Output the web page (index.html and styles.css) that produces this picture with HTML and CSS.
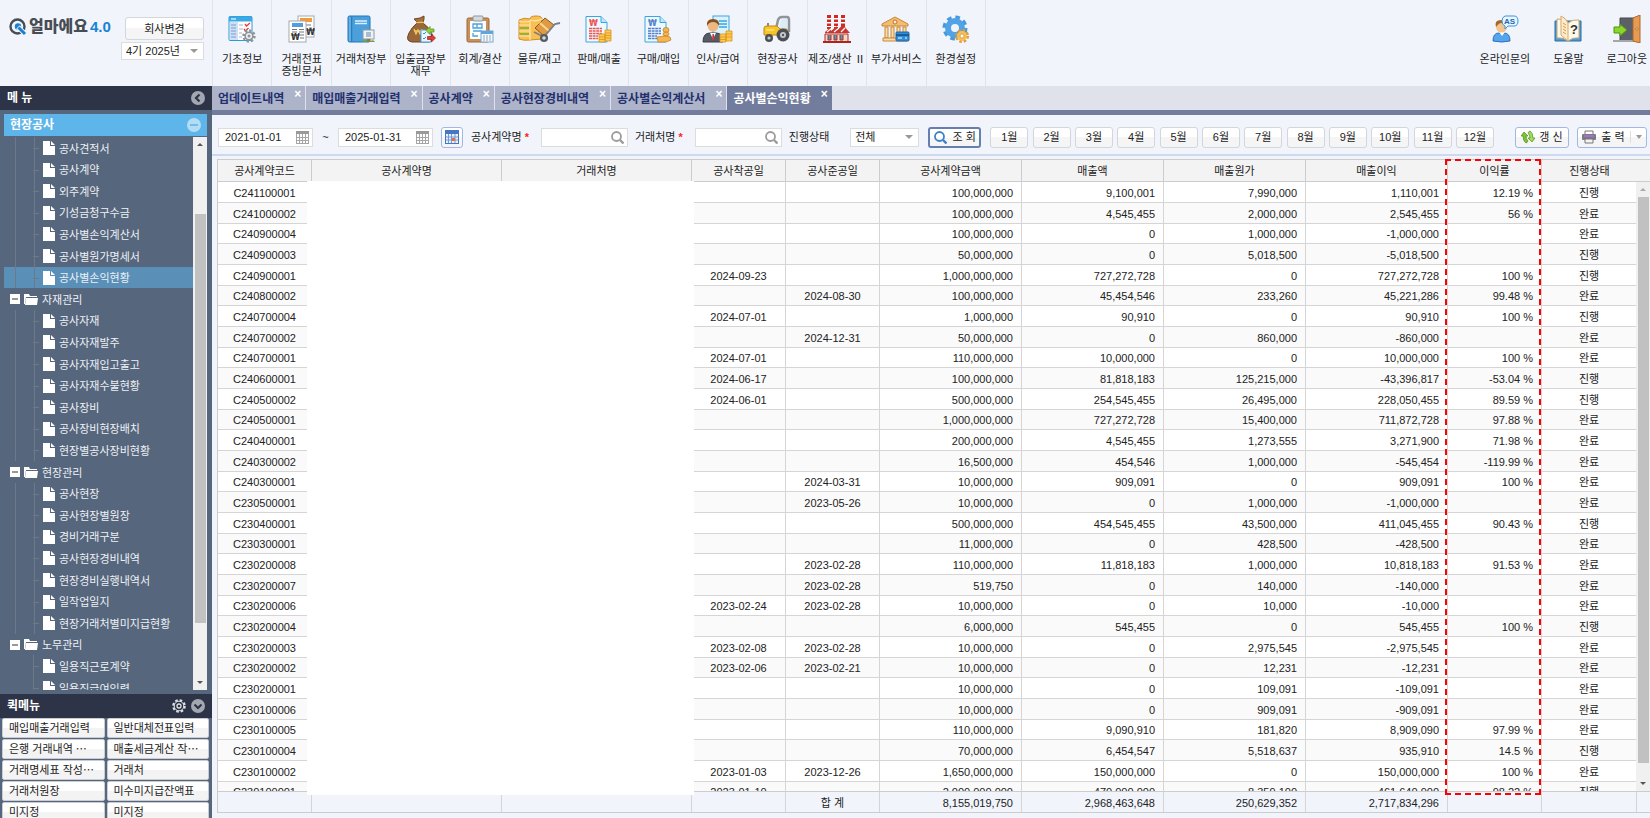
FILE: index.html
```html
<!DOCTYPE html>
<html lang="ko">
<head>
  <meta charset="UTF-8">
  <meta name="viewport" content="width=device-width, initial-scale=1.0">
  <title>얼마에요 4.0 - 공사별손익현황</title>
  <link rel="stylesheet" href="styles.css">
</head>
<body>
  <header class="top">
    <div class="brand">
      <div class="logo">
        <svg width="18" height="18" viewBox="0 0 18 18"><circle cx="8.500" cy="8.500" r="7" fill="none" stroke="#474c55" stroke-width="2.400"/><circle cx="9" cy="8.500" r="3.200" fill="#1583d2"/><path d="M9 9l7 7" stroke="#f1f4fb" stroke-width="5"/><path d="M9.500 9.500l6.500 6.500" stroke="#1583d2" stroke-width="3"/></svg>
        <span class="logo-name">얼마에요</span>
        <span class="logo-ver">4.0</span>
      </div>
      <div class="company">
        <button class="btn btn-company">회사변경</button>
        <div class="select-wrap year">
          <select aria-label="회계기수"><option>4기 2025년</option></select>
        </div>
      </div>
    </div>
    <nav class="modules">
      <a href="#" class="module">
        <svg width="28" height="28" viewBox="0 0 28 28"><rect x="1" y="1.500" width="23" height="24" rx="1" fill="#fff" stroke="#2b9bd8"/><rect x="1" y="1.500" width="23" height="5" fill="#3aa9e6"/><path d="M3 4h5" stroke="#c7ebff" stroke-width="1.500"/><rect x="2" y="7" width="8" height="18" fill="#cfe0f6"/><path d="M3 10h5M3 13h5M3 16h5M3 19h5M3 22h5" stroke="#7d9bc9"/><path d="M11 10h4M11 14h4M11 18h3M11 22h3" stroke="#a9b4c4"/><path d="M17 9l1.500 2L22 8M16 14l1.500 2 3-3" fill="none" stroke="#e23b3b" stroke-width="1.300"/><circle cx="21" cy="21" r="5.200" fill="none" stroke="#8d949c" stroke-width="3" stroke-dasharray="2.200 1.800"/><circle cx="21" cy="21" r="3.800" fill="#eef0f2" stroke="#8d949c" stroke-width="1.500"/><circle cx="21" cy="21" r="1.500" fill="#8d949c"/></svg>
        <span>기초정보</span>
      </a>
      <a href="#" class="module">
        <svg width="28" height="28" viewBox="0 0 28 28"><rect x="10" y="1" width="16" height="21" fill="#fff" stroke="#a5a9ae"/><rect x="12" y="3" width="12" height="4" fill="#f39a3b"/><path d="M13 10h10M21 13h3" stroke="#777"/><text x="18" y="20" class="won">₩</text><rect x="1" y="6" width="17" height="21" fill="#fff" stroke="#a5a9ae"/><rect x="4" y="8" width="11" height="4" fill="#4f9ee0"/><path d="M4 14.500h5M11 14.500h5M4 17h5M11 17h5M12 20h4M12 23h4" stroke="#777"/><text x="3" y="25" class="won">₩</text></svg>
        <span>거래전표<br>증빙문서</span>
      </a>
      <a href="#" class="module">
        <svg width="28" height="28" viewBox="0 0 28 28"><rect x="1" y="1" width="22" height="26" rx="1.500" fill="#4ba0dc" stroke="#2777b4"/><path d="M4.500 1.500v25" stroke="#2a7dbb" stroke-width="1.500"/><path d="M3 2v24" stroke="#7cc2ef"/><path d="M8 6h12M8 8.500h12" stroke="#d8efff" stroke-width="1.300"/><rect x="16" y="15" width="11" height="9" fill="#f0f3f6" stroke="#8f99a5"/><rect x="19" y="17" width="5" height="5" fill="#a9bccf"/><path d="M15 27q2-3 5-1h3q4-2 5 1z" fill="#6fa43b"/><path d="M20 24h3v3h-3z" fill="#9a7443"/></svg>
        <span>거래처장부</span>
      </a>
      <a href="#" class="module">
        <svg width="30" height="28" viewBox="0 0 30 28"><path d="M11 8q-5 4-8 10-4 8 3 9h17q5-1 3-8-3-7-9-11z" fill="#99673a" stroke="#6d4521"/><path d="M11 7l-3-3 6-1 4-2v3l-1 4z" fill="#a8723f" stroke="#6d4521"/><path d="M10 7.500h8" stroke="#edc45c" stroke-width="1.500"/><path d="M8 14l2 5 2-4 2 4 2-5M8 16h8" fill="none" stroke="#f0c85e" stroke-width="1.300"/><rect x="15" y="15" width="10" height="12" fill="#eaf6ff" stroke="#45a2d8"/><path d="M17 18l1 1 2-2M17 23l1 1 2-2" fill="none" stroke="#2f96c7"/><path d="M20 15.500l4-4v2.500h4v3h-4v2.500z" fill="#8fd136" stroke="#4a911a" stroke-width=".7"/><path d="M29.500 23l-4-4v2.500h-4v3h4v2.500z" fill="#e43b2b" stroke="#a81d14" stroke-width=".7"/></svg>
        <span>입출금장부<br>재무</span>
      </a>
      <a href="#" class="module">
        <svg width="28" height="28" viewBox="0 0 28 28"><rect x="1" y="3" width="22" height="24" rx="1.500" fill="#c98f57" stroke="#9d683a"/><rect x="4" y="6" width="16" height="18" fill="#fff"/><rect x="7" y="1" width="10" height="5" rx="1" fill="#d5d9de" stroke="#8e959c"/><path d="M7 9h9v4H7zM11 9v4M7 16h9M7 18v3h5" fill="none" stroke="#4aa3dd" stroke-width="1.300"/><rect x="15" y="16" width="12" height="11" fill="#f5faff" stroke="#7aa7ce"/><rect x="15" y="16" width="12" height="3" fill="#5fa6df"/><path d="M17 21h8M17 23h8M17 25h8" stroke="#93a9bd" stroke-dasharray="2 1"/></svg>
        <span>회계/결산</span>
      </a>
      <a href="#" class="module">
        <svg width="43" height="28" viewBox="0 0 43 28"><path d="M1 5q5-3 11-1 0-3 6-3t6 3v20l-12 1q-6 1-11-1z" fill="#f9bf55" stroke="#d28b22"/><path d="M1 6q5 2 11 0v19M12 5q6 2 12-1M1 10h11M1 16h11M1 21h11" fill="none" stroke="#ffe6a6" stroke-width="1.200"/><path d="M2 13h9M2 19h9" stroke="#66b634" stroke-width="1.700"/><path d="M17 13L27 3l9 7-10 11z" fill="#e09a41" stroke="#8e5a1d"/><path d="M22 8l9 8" stroke="#fbd793" stroke-width="2"/><path d="M16 17l10 5 11-13 5-1" fill="none" stroke="#7a7f86" stroke-width="1.800"/><circle cx="26" cy="23" r="4" fill="#575c63"/><circle cx="26" cy="23" r="1.800" fill="#d8dbde"/></svg>
        <span>물류/재고</span>
      </a>
      <a href="#" class="module">
        <svg width="28" height="28" viewBox="0 0 28 28"><path d="M1 1.500h15l6 6V27H1z" fill="#eef9ff" stroke="#3aa6de"/><path d="M16 1.500v6h6" fill="#bfe5fa" stroke="#3aa6de"/><text x="4" y="11" class="won red">₩</text><path d="M4 13.500h13M4 16h13M4 18.500h13M4 21h9M4 23.500h9" stroke="#ec5454" stroke-width="1.500" stroke-dasharray="3 .6"/><g fill="#fdca50" stroke="#dc9320" stroke-width=".8"><path d="M14 19h6v8h-6zM20 15h6v11h-6z"/><path d="M14 22h6M14 24.500h6M20 18h6M20 20.500h6M20 23h6"/></g></svg>
        <span>판매/매출</span>
      </a>
      <a href="#" class="module">
        <svg width="28" height="28" viewBox="0 0 28 28"><path d="M1 1.500h15l6 6V27H1z" fill="#eef9ff" stroke="#3aa6de"/><path d="M16 1.500v6h6" fill="#bfe5fa" stroke="#3aa6de"/><text x="4" y="11" class="won blue">₩</text><path d="M4 13.500h13M4 16h13M4 18.500h13M4 21h9M4 23.500h9" stroke="#557fcb" stroke-width="1.500" stroke-dasharray="3 .6"/><g fill="#f5b64f" stroke="#c9822a" stroke-width=".8"><ellipse cx="22" cy="15" rx="3" ry="2.500"/><ellipse cx="22" cy="19" rx="3" ry="2"/><path d="M13 22l8-1 5 1 1 3-5 2h-8z"/></g></svg>
        <span>구매/매입</span>
      </a>
      <a href="#" class="module">
        <svg width="32" height="28" viewBox="0 0 32 28"><rect x="11" y="1" width="16" height="19" fill="#d9f2fd" stroke="#3aa6de"/><path d="M17 6h8M17 9h8M17 12h8" stroke="#3aa6de" stroke-width="1.500"/><path d="M1 27q0-9 7-9h6q7 0 7 9z" fill="#565b66" stroke="#383c45"/><path d="M8 18l3 6 3-6z" fill="#fff"/><path d="M10.500 19h1.500l.5 6h-2.500z" fill="#c93a3a"/><circle cx="11" cy="11" r="5.500" fill="#edb983"/><path d="M5 11q-1-7 6-7t6 7q-2-4-6-4t-6 4z" fill="#87501f"/><g fill="#fdca50" stroke="#dc9320" stroke-width=".8"><path d="M18 19h6v8h-6zM24 16h6v10h-6z"/><path d="M18 22h6M18 24.500h6M24 19h6M24 22h6"/></g></svg>
        <span>인사/급여</span>
      </a>
      <a href="#" class="module">
        <svg width="28" height="28" viewBox="0 0 28 28"><path d="M13 14l2-9q1-3 4-3h5q2 0 2 3v12" fill="none" stroke="#8f959c" stroke-width="2.500"/><path d="M16 13l2-7q0-2 3-2h3v9z" fill="#dcecf7"/><path d="M5 12V8" stroke="#666" stroke-width="1.500"/><path d="M1 13q0-2 3-2h10l3 3h7v6H1z" fill="#f9c526" stroke="#b88a12"/><path d="M3 15h8" stroke="#fff0a6"/><circle cx="20" cy="20" r="6.500" fill="#4b5057"/><circle cx="20" cy="20" r="3" fill="#c7cbd0"/><circle cx="20" cy="20" r="1.200" fill="#555"/><circle cx="6" cy="23" r="4" fill="#4b5057"/><circle cx="6" cy="23" r="1.600" fill="#c7cbd0"/></svg>
        <span>현장공사</span>
      </a>
      <a href="#" class="module">
        <svg width="28" height="28" viewBox="0 0 28 28"><g stroke-width="4" fill="none"><path d="M6 0v14M13 0v14M20 0v12" stroke="#cf2a22"/><path d="M6 3v9M13 3v9M20 3v8" stroke="#fff" stroke-dasharray="1.500 2.500"/></g><path d="M2 17l6-5v4l6-5v4l6-5 7 8H2z" fill="#c8372e"/><path d="M4 17l5-4M11 17l5-4M18 17l4-4" stroke="#fff" stroke-width="1.200"/><path d="M2 19h23v8H2z" fill="#f5d9c5" stroke="#b12b23"/><path d="M5 20v5h3v-5M11 20v5h3v-5M17 20v5h3v-5" fill="#4d97c5" stroke="#b12b23"/><path d="M0 27h28" stroke="#ad241d" stroke-width="2"/></svg>
        <span>제조/생산 Ⅱ</span>
      </a>
      <a href="#" class="module">
        <svg width="30" height="28" viewBox="0 0 30 28"><path d="M14 2L1 9v2h26V9z" fill="#f2bd72" stroke="#c98639"/><circle cx="14" cy="7" r="2" fill="#fff0cd" stroke="#b97528"/><g fill="#fbdda4" stroke="#c98639"><path d="M4 12h3v11H4zM10 12h3v11h-3zM16 12h3v11h-3zM22 12h3v11h-3z"/><path d="M2 23h24v3H2z"/></g><rect x="15" y="17" width="13" height="9" rx="1" fill="#2f8ddc" stroke="#1a67ab"/><path d="M15 20h13" stroke="#164f86" stroke-width="1.500"/><path d="M17 23h4M24 23h2" stroke="#fff"/></svg>
        <span>부가서비스</span>
      </a>
      <a href="#" class="module">
        <svg width="28" height="28" viewBox="0 0 28 28"><circle cx="13" cy="13" r="10.500" fill="none" stroke="#4699df" stroke-width="4" stroke-dasharray="4.500 3.750"/><circle cx="13" cy="13" r="7" fill="none" stroke="#4fa3e6" stroke-width="6"/><circle cx="20" cy="21" r="5.500" fill="none" stroke="#e39a30" stroke-width="3" stroke-dasharray="2.400 1.920"/><circle cx="20" cy="21" r="3.600" fill="#fff" stroke="#f7be56" stroke-width="3"/><circle cx="20" cy="21" r="2" fill="#fff" stroke="#d88d26" stroke-width=".8"/></svg>
        <span>환경설정</span>
      </a>
    </nav>
    <nav class="helpers">
      <a href="#" class="helper">
        <svg width="28" height="28" viewBox="0 0 28 28"><path d="M2 26q0-8 6-8h5q6 0 6 8-8 2-17 0z" fill="#55a4ec" stroke="#2a71bd"/><path d="M8 17l3 4 3-4z" fill="#fff"/><circle cx="10.500" cy="12" r="5.500" fill="#f3c48d"/><path d="M5 12q-2-7 5-7 6 0 6 6-4-3-6-3t-5 4z" fill="#a5662a"/><path d="M14 1h9q4 0 4 5t-4 5h-6l-3 3v-3q-3-1-3-5t3-5z" fill="#e9f6ff" stroke="#3b94dd"/><text x="13" y="9" class="as">AS</text></svg>
        <span>온라인문의</span>
      </a>
      <a href="#" class="helper">
        <svg width="28" height="28" viewBox="0 0 28 28"><path d="M1 6h26v20H1z" fill="#4e9bd6" stroke="#2a6ca5"/><path d="M3 4q6-1 11 4 5-4 11-3v18q-6-1-11 3-5-4-11-3z" fill="#fff9ea" stroke="#c7a871"/><path d="M14 8v18L7 20V1q5 2 7 7z" fill="#ffecca" stroke="#d1a970"/><path d="M9 8l3 2M9 11l3 2M9 14l3 2M9 17l3 2" stroke="#d49a54"/><text x="16" y="19" class="question">?</text></svg>
        <span>도움말</span>
      </a>
      <a href="#" class="helper">
        <svg width="28" height="28" viewBox="0 0 28 28"><path d="M7 3h14v23H7z" fill="#5c6068" stroke="#46494f"/><path d="M0 26h27" stroke="#a4a8ad" stroke-width="2"/><path d="M20 3l7-3v28l-7-2z" fill="#e69a52" stroke="#af6829"/><circle cx="24" cy="14" r="1.200" fill="#ffe28a" stroke="#8a561f" stroke-width=".6"/><path d="M1 12h6V9l7 6-7 6v-3H1z" fill="#8cd52a" stroke="#4c9514"/></svg>
        <span>로그아웃</span>
      </a>
    </nav>
  </header>

  <div class="main">
    <aside class="side">
      <div class="side-title">
        <h2>메 뉴</h2>
        <button class="round" aria-label="메뉴 접기"><svg width="14" height="14" viewBox="0 0 14 14"><circle cx="7" cy="7" r="7" fill="#a3a7b1"/><path d="M8.500 3.500L5 7l3.500 3.500" fill="none" stroke="#2e3447" stroke-width="2.200"/></svg></button>
      </div>
      <div class="side-group">
        <h3>현장공사</h3>
        <button class="round" aria-label="그룹 접기"><svg width="14" height="14" viewBox="0 0 14 14"><circle cx="7" cy="7" r="7" fill="#b3dcf5"/><path d="M3 7h8" stroke="#5eb5e9" stroke-width="1.500"/></svg></button>
      </div>
      <div class="tree-box">
        <ul class="tree" id="tree"></ul>
        <div class="scroll tree-scroll"><span class="up"></span><span class="thumb"></span><span class="down"></span></div>
      </div>
      <div class="side-title">
        <h2>퀵메뉴</h2>
        <button class="round quick-set" aria-label="퀵메뉴 설정"><svg width="14" height="14" viewBox="0 0 14 14"><circle cx="7" cy="7" r="5.800" fill="none" stroke="#dfe1e6" stroke-width="2" stroke-dasharray="2.600 1.950"/><circle cx="7" cy="7" r="4.800" fill="none" stroke="#dfe1e6"/><circle cx="7" cy="7" r="2" fill="none" stroke="#dfe1e6" stroke-width="1.300"/></svg></button>
        <button class="round" aria-label="퀵메뉴 닫기"><svg width="14" height="14" viewBox="0 0 14 14"><circle cx="7" cy="7" r="7" fill="#a3a7b1"/><path d="M3.500 5.500L7 9l3.500-3.500" fill="none" stroke="#2e3447" stroke-width="2.200"/></svg></button>
      </div>
      <div class="quick">
        <button>매입매출거래입력</button><button>일반대체전표입력</button>
        <button>은행 거래내역 ⋯</button><button>매출세금계산 작⋯</button>
        <button>거래명세표 작성⋯</button><button>거래처</button>
        <button>거래처원장</button><button>미수미지급잔액표</button>
        <button>미지정</button><button>미지정</button>
      </div>
    </aside>

    <section class="content">
      <nav class="tabs">
        <a href="#" class="tab">업데이트내역<span class="close">×</span></a>
        <a href="#" class="tab">매입매출거래입력<span class="close">×</span></a>
        <a href="#" class="tab">공사계약<span class="close">×</span></a>
        <a href="#" class="tab">공사현장경비내역<span class="close">×</span></a>
        <a href="#" class="tab">공사별손익계산서<span class="close">×</span></a>
        <a href="#" class="tab active">공사별손익현황<span class="close">×</span></a>
      </nav>

      <form class="filter">
        <div class="field date">
          <input type="text" value="2021-01-01" aria-label="시작일">
          <svg width="13" height="13" viewBox="0 0 13 13"><path d="M0 0h13v3H0z" fill="#999"/><path d="M.5 3v10M3.500 3v10M6.500 3v10M9.500 3v10M12.500 3v10M0 6.500h13M0 9.500h13M0 12.500h13" stroke="#a5a5a5"/></svg>
        </div>
        <span class="tilde">~</span>
        <div class="field date">
          <input type="text" value="2025-01-31" aria-label="종료일">
          <svg width="13" height="13" viewBox="0 0 13 13"><path d="M0 0h13v3H0z" fill="#999"/><path d="M.5 3v10M3.500 3v10M6.500 3v10M9.500 3v10M12.500 3v10M0 6.500h13M0 9.500h13M0 12.500h13" stroke="#a5a5a5"/></svg>
        </div>
        <button type="button" class="btn blue-line btn-cal" aria-label="기간 선택"><svg width="14" height="14" viewBox="0 0 14 14"><rect x=".5" y=".5" width="13" height="13" fill="#e6f1fd" stroke="#4a77bb"/><path d="M0 0h14v4H0z" fill="#4677c4"/><path d="M3.500 4v9M6.500 4v9M10 4v9M1 7h12M1 10h12" stroke="#739bd2"/><path d="M7 8h3v3H7z" fill="#ef6b3f"/></svg></button>
        <label for="contract">공사계약명 <em>*</em></label>
        <div class="field find">
          <input type="text" id="contract">
          <svg width="13" height="13" viewBox="0 0 13 13"><circle cx="5.500" cy="5.500" r="4.500" fill="none" stroke="#9c9c9c" stroke-width="1.800"/><path d="M9 9l3.500 3.500" stroke="#9c9c9c" stroke-width="2.400"/></svg>
        </div>
        <label for="client">거래처명 <em>*</em></label>
        <div class="field find">
          <input type="text" id="client">
          <svg width="13" height="13" viewBox="0 0 13 13"><circle cx="5.500" cy="5.500" r="4.500" fill="none" stroke="#9c9c9c" stroke-width="1.800"/><path d="M9 9l3.500 3.500" stroke="#9c9c9c" stroke-width="2.400"/></svg>
        </div>
        <label for="state">진행상태</label>
        <div class="select-wrap state">
          <select id="state"><option>전체</option><option>진행</option><option>완료</option></select>
        </div>
        <button type="button" class="btn btn-search"><svg width="13" height="13" viewBox="0 0 13 13"><circle cx="5.500" cy="5.500" r="4.500" fill="none" stroke="#3d82c9" stroke-width="1.800"/><path d="M9 9l3.500 3.500" stroke="#3d82c9" stroke-width="2.400"/></svg>조 회</button>
        <div class="months">
          <button type="button" class="btn">1월</button>
          <button type="button" class="btn">2월</button>
          <button type="button" class="btn">3월</button>
          <button type="button" class="btn">4월</button>
          <button type="button" class="btn">5월</button>
          <button type="button" class="btn">6월</button>
          <button type="button" class="btn">7월</button>
          <button type="button" class="btn">8월</button>
          <button type="button" class="btn">9월</button>
          <button type="button" class="btn">10월</button>
          <button type="button" class="btn">11월</button>
          <button type="button" class="btn">12월</button>
        </div>
        <div class="actions">
          <button type="button" class="btn blue-line btn-refresh"><svg width="14" height="14" viewBox="0 0 14 14"><path d="M0 6l3-4 4 4H5q0 3 2 5-1 2-2 2-3-2-3-7z" fill="#7fc232" stroke="#4e8f1a" stroke-width=".7"/><path d="M14 8l-3 4-4-4h2q0-3-2-5 1-2 2-2 3 2 3 7z" fill="#a3db5c" stroke="#4e8f1a" stroke-width=".7"/></svg>갱 신</button>
          <button type="button" class="btn blue-line btn-print"><svg width="14" height="14" viewBox="0 0 14 14"><path d="M3 1h8v4H3z" fill="#fff" stroke="#777"/><rect x="0" y="4" width="14" height="6" rx="1" fill="#777b86"/><path d="M2 6h10" stroke="#a86fc4" stroke-width="2"/><path d="M3 9h8v4H3z" fill="#f3f3f8" stroke="#777"/></svg>출 력<span class="drop"></span></button>
        </div>
      </form>

      <div class="grid-area">
        <div class="grid-box">
          <table class="grid">
            <colgroup>
              <col class="c-code"><col class="c-name"><col class="c-name"><col class="c-date"><col class="c-date">
              <col class="c-price"><col class="c-price"><col class="c-price"><col class="c-price"><col class="c-rate"><col class="c-state"><col class="c-scroll">
            </colgroup>
            <thead>
              <tr>
                <th>공사계약코드</th><th>공사계약명</th><th>거래처명</th><th>공사착공일</th><th>공사준공일</th>
                <th>공사계약금액</th><th>매출액</th><th>매출원가</th><th>매출이익</th><th>이익률</th><th>진행상태</th><th></th>
              </tr>
            </thead>
            <tbody id="rows"></tbody>
            <tfoot>
              <tr>
                <td></td><td></td><td></td><td></td><td class="mid">합 계</td>
                <td class="num">8,155,019,750</td><td class="num">2,968,463,648</td><td class="num">250,629,352</td><td class="num">2,717,834,296</td>
                <td></td><td></td><td></td>
              </tr>
            </tfoot>
          </table>
        </div>
        <div class="scroll grid-scroll"><span class="up"></span><span class="thumb"></span><span class="down"></span></div>
        <div class="blank"></div>
        <div class="mark"></div>
      </div>
    </section>
  </div>

  <script>
    const menu = [
      { items: ["공사견적서", "공사계약", "외주계약", "기성금청구수금", "공사별손익계산서", "공사별원가명세서", "공사별손익현황"] },
      { name: "자재관리", items: ["공사자재", "공사자재발주", "공사자재입고출고", "공사자재수불현황", "공사장비", "공사장비현장배치", "현장별공사장비현황"] },
      { name: "현장관리", items: ["공사현장", "공사현장별원장", "경비거래구분", "공사현장경비내역", "현장경비실행내역서", "일작업일지", "현장거래처별미지급현황"] },
      { name: "노무관리", items: ["일용직근로계약", "일용직급여입력"] }
    ];
    const selected = "공사별손익현황";

    // 코드, 착공일, 준공일, 계약금액, 매출액, 매출원가, 매출이익, 이익률, 상태
    const rows = [
      ["C241100001", "", "", "100,000,000", "9,100,001", "7,990,000", "1,110,001", "12.19 %", "진행"],
      ["C241000002", "", "", "100,000,000", "4,545,455", "2,000,000", "2,545,455", "56 %", "완료"],
      ["C240900004", "", "", "100,000,000", "0", "1,000,000", "-1,000,000", "", "완료"],
      ["C240900003", "", "", "50,000,000", "0", "5,018,500", "-5,018,500", "", "진행"],
      ["C240900001", "2024-09-23", "", "1,000,000,000", "727,272,728", "0", "727,272,728", "100 %", "진행"],
      ["C240800002", "", "2024-08-30", "100,000,000", "45,454,546", "233,260", "45,221,286", "99.48 %", "완료"],
      ["C240700004", "2024-07-01", "", "1,000,000", "90,910", "0", "90,910", "100 %", "진행"],
      ["C240700002", "", "2024-12-31", "50,000,000", "0", "860,000", "-860,000", "", "완료"],
      ["C240700001", "2024-07-01", "", "110,000,000", "10,000,000", "0", "10,000,000", "100 %", "완료"],
      ["C240600001", "2024-06-17", "", "100,000,000", "81,818,183", "125,215,000", "-43,396,817", "-53.04 %", "진행"],
      ["C240500002", "2024-06-01", "", "500,000,000", "254,545,455", "26,495,000", "228,050,455", "89.59 %", "진행"],
      ["C240500001", "", "", "1,000,000,000", "727,272,728", "15,400,000", "711,872,728", "97.88 %", "완료"],
      ["C240400001", "", "", "200,000,000", "4,545,455", "1,273,555", "3,271,900", "71.98 %", "완료"],
      ["C240300002", "", "", "16,500,000", "454,546", "1,000,000", "-545,454", "-119.99 %", "완료"],
      ["C240300001", "", "2024-03-31", "10,000,000", "909,091", "0", "909,091", "100 %", "완료"],
      ["C230500001", "", "2023-05-26", "10,000,000", "0", "1,000,000", "-1,000,000", "", "완료"],
      ["C230400001", "", "", "500,000,000", "454,545,455", "43,500,000", "411,045,455", "90.43 %", "진행"],
      ["C230300001", "", "", "11,000,000", "0", "428,500", "-428,500", "", "완료"],
      ["C230200008", "", "2023-02-28", "110,000,000", "11,818,183", "1,000,000", "10,818,183", "91.53 %", "완료"],
      ["C230200007", "", "2023-02-28", "519,750", "0", "140,000", "-140,000", "", "완료"],
      ["C230200006", "2023-02-24", "2023-02-28", "10,000,000", "0", "10,000", "-10,000", "", "완료"],
      ["C230200004", "", "", "6,000,000", "545,455", "0", "545,455", "100 %", "진행"],
      ["C230200003", "2023-02-08", "2023-02-28", "10,000,000", "0", "2,975,545", "-2,975,545", "", "완료"],
      ["C230200002", "2023-02-06", "2023-02-21", "10,000,000", "0", "12,231", "-12,231", "", "완료"],
      ["C230200001", "", "", "10,000,000", "0", "109,091", "-109,091", "", "완료"],
      ["C230100006", "", "", "10,000,000", "0", "909,091", "-909,091", "", "완료"],
      ["C230100005", "", "", "110,000,000", "9,090,910", "181,820", "8,909,090", "97.99 %", "완료"],
      ["C230100004", "", "", "70,000,000", "6,454,547", "5,518,637", "935,910", "14.5 %", "진행"],
      ["C230100002", "2023-01-03", "2023-12-26", "1,650,000,000", "150,000,000", "0", "150,000,000", "100 %", "완료"],
      ["C230100001", "2023-01-10", "", "2,000,000,000", "470,000,000", "8,359,100", "461,640,900", "98.22 %", "진행"]
    ];

    const fileIcon = `<svg class="file" width="12" height="14" viewBox="0 0 12 14"><path d="M0 0h7v5h5v9H0z" fill="#fff"/><path d="M8 0l4 4H8z" fill="#fff"/></svg>`;
    const folderIcon = `<svg class="folder" width="14" height="11" viewBox="0 0 14 11"><path d="M0 0h5l1 2h7v1H2L1 10H0z" fill="#fff"/><path d="M2 4h12l-1 7H1z" fill="#fff"/></svg>`;
    const minusIcon = `<svg class="minus" width="10" height="10" viewBox="0 0 10 10"><path d="M0 0h10v10H0z" fill="#fff"/><path d="M2 5h6" stroke="#777" stroke-width="1.500"/></svg>`;

    let tree = "";
    menu.forEach((group, g) => {
      if (group.name) {
        tree += `<li class="parent">${minusIcon}${folderIcon}<a href="#">${group.name}</a></li>`;
      }
      group.items.forEach((item, i) => {
        let cls = "child";
        if (item === selected) cls += " selected";
        if (g === menu.length - 1) cls += " end";
        tree += `<li class="${cls}">${fileIcon}<a href="#">${item}</a></li>`;
      });
    });
    document.getElementById("tree").innerHTML = tree;

    document.getElementById("rows").innerHTML = rows.map(r => `
      <tr>
        <td class="mid">${r[0]}</td><td></td><td></td>
        <td class="mid">${r[1]}</td><td class="mid">${r[2]}</td>
        <td class="num">${r[3]}</td><td class="num">${r[4]}</td><td class="num">${r[5]}</td><td class="num">${r[6]}</td>
        <td class="num">${r[7]}</td><td class="mid">${r[8]}</td><td></td>
      </tr>`).join("");
  </script>
</body>
</html>
```
FILE: styles.css
```css
* {
  box-sizing: border-box;
}
body {
  margin: 0;
  height: 100vh;
  display: flex;
  flex-direction: column;
  overflow: hidden;
  background: #f1f4fb;
  color: #222;
  font-family: "Liberation Sans", "Noto Sans CJK KR", sans-serif;
  font-size: 11px;
  line-height: 12px;
}
a {
  color: inherit;
  text-decoration: none;
}
button, input, select {
  font: inherit;
  color: inherit;
  margin: 0;
}
h2, h3 {
  margin: 0;
  font-size: 12px;
  color: #fff;
}
ul {
  list-style: none;
  margin: 0;
  padding: 0;
}

/* 상단 */
.top {
  display: flex;
  flex: none;
  height: 86px;
}
.brand {
  display: flex;
  justify-content: space-between;
  width: 212px;
  padding: 17px 8px 0 9px;
}
.logo {
  display: flex;
  align-items: center;
  height: 20px;
}
.logo-name {
  margin: 0 2px;
  font-size: 16px;
  font-weight: 900;
  color: #474c55;
}
.logo-ver {
  font-size: 15px;
  font-weight: bold;
  color: #1583d2;
}
.company {
  display: flex;
  flex-direction: column;
  align-items: flex-end;
  gap: 2px;
}
.btn {
  display: flex;
  align-items: center;
  justify-content: center;
  height: 21px;
  padding: 0;
  border: 1px solid #d3d6db;
  border-radius: 3px;
  background: linear-gradient(#fff 50%, #f5f5f5 50%);
  white-space: nowrap;
}
.btn-company {
  width: 79px;
  height: 23px;
}
.select-wrap {
  position: relative;
}
.select-wrap::after {
  content: "";
  position: absolute;
  right: 6px;
  top: 7px;
  border: 4px solid transparent;
  border-top-color: #999;
  border-bottom: 0;
  pointer-events: none;
}
select {
  appearance: none;
  width: 100%;
  height: 18px;
  padding: 0 4px;
  border: 1px solid #dcdcdc;
  border-radius: 0;
  background: #fff;
}
.year {
  width: 83px;
}
.modules {
  display: grid;
  grid-template-columns: repeat(13, 1fr);
  width: 774px;
  border-left: 1px solid #dfe3ea;
}
.module, .helper {
  display: flex;
  flex-direction: column;
  align-items: center;
  gap: 10px;
  min-width: 0;
  padding-top: 15px;
  text-align: center;
  white-space: nowrap;
}
.module {
  border-right: 1px solid #dfe3ea;
}
.helpers {
  display: flex;
  gap: 23px;
  margin-left: auto;
  padding-right: 3px;
}
.won {
  font: bold 8px "DejaVu Sans", sans-serif;
  fill: #333;
}
.won.red {
  fill: #ec5454;
}
.won.blue {
  fill: #557fcb;
}
.as {
  font: bold 8px "Liberation Sans", sans-serif;
  fill: #1b66b8;
}
.question {
  font: bold 13px "Liberation Sans", sans-serif;
  fill: #333;
}

/* 왼쪽 메뉴 */
.main {
  display: flex;
  flex: 1;
  min-height: 0;
}
.side {
  display: flex;
  flex-direction: column;
  flex: none;
  width: 212px;
  background: #56667d;
}
.side-title, .side-group {
  display: flex;
  align-items: center;
  flex: none;
  height: 24px;
  padding: 0 7px;
  background: #2e3447;
}
.side-title h2, .side-group h3 {
  flex: 1;
}
.side-group {
  height: 22px;
  margin: 4px 5px 1px 4px;
  padding: 0 6px;
  background: #5eb5e9;
}
.round {
  display: flex;
  padding: 0;
  border: 0;
  background: none;
}
.quick-set {
  margin-right: 5px;
}
.tree-box {
  display: flex;
  flex: 1;
  min-height: 0;
  margin: 0 5px 4px 4px;
}
.tree {
  flex: 1;
  overflow: hidden;
  color: #eef1f5;
}
.tree li {
  display: flex;
  align-items: center;
  height: 22px;
}
.tree li:nth-child(5n+2), .tree li:nth-child(5n+4) {
  height: 21px;
}
.tree a {
  padding-top: 1px;
}
.child {
  position: relative;
  gap: 4px;
  padding-left: 39px;
}
.child::before {
  content: "";
  position: absolute;
  left: 11px;
  top: 0;
  bottom: 0;
  width: 18px;
  border: solid #6d7986;
  border-width: 0 1px;
}
.child.end::before {
  border-left: 0;
}
.child::after {
  content: "";
  position: absolute;
  left: 29px;
  top: 50%;
  width: 6px;
  border-top: 1px solid #6d7986;
}
.child.selected {
  background: #5a90b8;
}
.parent {
  gap: 4px;
  padding-left: 6px;
}
.scroll {
  display: flex;
  flex-direction: column;
  align-items: center;
  background: #f0f0f0;
}
.scroll .thumb {
  width: 11px;
  background: #c1c1c1;
}
.up, .down {
  border: 3px solid transparent;
}
.up {
  margin-top: 6px;
  border-top: 0;
  border-bottom-color: #555;
}
.down {
  margin: auto 0 6px;
  border-bottom: 0;
  border-top-color: #555;
}
.tree-scroll {
  width: 14px;
}
.tree-scroll .thumb {
  height: 74%;
  margin-top: 68px;
}
.quick {
  display: grid;
  grid-template-columns: 1fr 1fr;
  grid-auto-rows: 20px;
  gap: 1px 2px;
  flex: none;
  height: 100px;
  padding: 0 3px 0 2px;
  overflow: hidden;
}
.quick button {
  padding: 0 6px;
  border: 1px solid #c9cdd3;
  border-radius: 2px;
  background: linear-gradient(#fff 50%, #f3f3f3 50%);
  text-align: left;
  white-space: nowrap;
  overflow: hidden;
}

/* 탭 */
.content {
  display: flex;
  flex-direction: column;
  flex: 1;
  min-width: 0;
}
.tabs {
  display: flex;
  gap: 1px;
  flex: none;
  height: 29px;
  border-bottom: 5px solid #727d9e;
  background: #dfe2ea;
}
.tab {
  display: flex;
  align-items: center;
  position: relative;
  padding: 1px 21px 0 6px;
  background: #adb3c9;
  color: #23306e;
  font-size: 12px;
  font-weight: bold;
  white-space: nowrap;
}
.tab.active {
  background: #727d9e;
  color: #fff;
}
.close {
  position: absolute;
  top: 2px;
  right: 4px;
  color: #fff;
}

/* 조회조건 */
.filter {
  display: flex;
  align-items: center;
  flex: none;
  height: 41px;
  padding: 11px 3px 6px 6px;
  border-bottom: 2px solid #cddaee;
  white-space: nowrap;
}
.field {
  display: flex;
  align-items: center;
  height: 19px;
  padding-right: 3px;
  border: 1px solid #dcdcdc;
  background: #fff;
}
.field input {
  flex: 1;
  min-width: 0;
  height: 100%;
  padding: 0 0 0 6px;
  border: 0;
  background: none;
  outline: none;
}
.date {
  width: 95px;
}
.tilde {
  width: 25px;
  text-align: center;
}
.btn-cal {
  width: 22px;
  margin: 0 8px;
}
.blue-line {
  border-color: #9fb9e2;
}
.filter label em {
  margin-right: 12px;
  color: #f22;
  font-style: normal;
  font-weight: bold;
}
.find {
  width: 87px;
  margin-right: 7px;
}
.state {
  width: 69px;
  margin: 0 9px 0 21px;
}
.state select {
  height: 19px;
}
.btn-search {
  gap: 6px;
  width: 53px;
  border: 2px solid #667fae;
}
.months {
  display: flex;
  flex: 1;
  justify-content: space-between;
  margin: 0 21px 0 9px;
}
.months .btn {
  width: 38px;
}
.actions {
  display: flex;
  gap: 8px;
}
.btn-refresh {
  gap: 4px;
  width: 54px;
}
.btn-print {
  gap: 5px;
  width: 70px;
}
.drop {
  padding: 4px 0 4px 5px;
  border-left: 1px solid #ddd;
}
.drop::before {
  content: "";
  display: block;
  border: 3px solid transparent;
  border-top: 4px solid #999;
  border-bottom: 0;
}

/* 목록 */
.grid-area {
  position: relative;
  flex: 1;
  min-height: 0;
  margin: 3px 0 5px 5px;
}
.grid-box {
  height: 100%;
  overflow: hidden;
  border: solid #ccc;
  border-width: 1px 0 1px 1px;
}
.grid {
  width: 100%;
  table-layout: fixed;
  border-collapse: separate;
  border-spacing: 0;
  background: #fff;
}
.c-code, .c-date {
  width: 94px;
}
.c-name {
  width: 190px;
}
.c-price {
  width: 142px;
}
.c-rate {
  width: 94px;
}
.c-state {
  width: 95px;
}
.c-scroll {
  width: 14px;
}
.grid th, .grid td {
  height: 21px;
  padding: 1px 0 0;
  border: solid #d5d5d5;
  border-width: 0 1px 1px 0;
  font-weight: normal;
  white-space: nowrap;
}
.grid thead th {
  position: sticky;
  top: 0;
  height: 22px;
  padding: 0;
  background: #f3f3f3;
  border-color: #ccc;
}
.grid thead th:nth-last-child(-n+2) {
  border-right: 0;
}
.grid tbody tr:nth-child(3n) td {
  height: 20px;
}
.grid tbody tr:nth-child(even) {
  background: #fafafa;
}
.grid .mid {
  text-align: center;
}
.grid .num {
  padding-right: 8px;
  text-align: right;
}
.grid tfoot td {
  position: sticky;
  bottom: 0;
  border-top: 1px solid #ccc;
  border-bottom: 0;
  background: #f1f4fb;
}
.grid-scroll {
  position: absolute;
  top: 23px;
  right: 0;
  bottom: 22px;
  width: 14px;
}
.grid-scroll .up {
  border-bottom-color: #aaa;
}
.grid-scroll .thumb {
  height: 93%;
  margin-top: 6px;
}
/* 계약명, 거래처명 가림 */
.blank {
  position: absolute;
  left: 90px;
  top: 22px;
  bottom: 18px;
  width: 387px;
  background: #fff;
}
/* 이익률 강조 */
.mark {
  position: absolute;
  top: 0;
  right: 109px;
  bottom: 18px;
  width: 96px;
  border: 2px dashed #f00;
}
```
